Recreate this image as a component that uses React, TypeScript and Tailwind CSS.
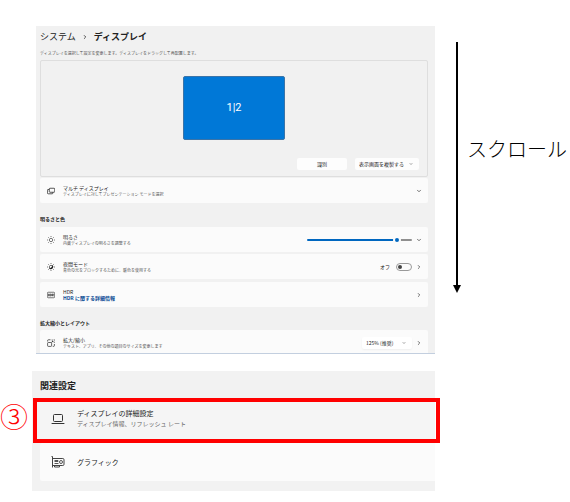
import * as React from 'react'
import { ChevronDown, ChevronRight } from 'lucide-react'
import { clsx } from 'clsx'

function MultiDisplayIcon() {
  return (
    <svg viewBox="0 0 16 16" className="size-2 shrink-0" fill="none" stroke="currentColor" strokeWidth="1.5">
      <rect x="4.5" y="2.5" width="11" height="8" rx="1.5" />
      <path d="M4.5 5H2.2A1.4 1.4 0 0 0 .8 6.4v5.4a1.8 1.8 0 0 0 1.8 1.8h7.6a1.4 1.4 0 0 0 1.4-1.4v-1.7" />
    </svg>
  )
}

function SunIcon({ filled = false }: { filled?: boolean }) {
  return (
    <svg viewBox="0 0 16 16" className="size-2 shrink-0" fill="none" stroke="currentColor" strokeWidth="1.2">
      <circle cx="8" cy="8" r="3.4" />
      {filled && <path d="M5.2 10.8A4 4 0 0 0 10.8 5.2 5 5 0 0 1 5.2 10.8Z" fill="currentColor" strokeWidth="2" />}
      <path d="M8 0v2M8 14v2M0 8h2M14 8h2M2.3 2.3l1.4 1.4M12.3 12.3l1.4 1.4M2.3 13.7l1.4-1.4M12.3 3.7l1.4-1.4" />
    </svg>
  )
}

function HdrIcon() {
  return (
    <svg viewBox="0 0 16 16" className="size-2 shrink-0" fill="none" stroke="currentColor" strokeWidth="1.2">
      <rect x=".7" y="2.5" width="14.6" height="11" rx="2" />
      <path d="M3 5.5v5M5.4 5.5v5M3 8h2.4M7.2 5.8v4.4h.6c2 0 2-4.4 0-4.4ZM11 10.5V5.8h1.2c1.5 0 1.5 2.3 0 2.3H11M12 8.2l1.2 2.3" />
    </svg>
  )
}

function ScaleIcon() {
  return (
    <svg viewBox="0 0 16 16" className="size-2 shrink-0" fill="none" stroke="currentColor" strokeWidth="1.4">
      <path d="M7 1.5H3A1.8 1.8 0 0 0 1.2 3.3V5M9.5 1.5H11M13.5 1.5h1.3V3M14.8 5.5v2M14.8 10v3a1.8 1.8 0 0 1-1.8 1.8h-1.5" />
      <rect x="1.2" y="7" width="8" height="7.8" rx="1.5" />
      <path d="M9 7l3-3M9.5 4H12v2.5" />
    </svg>
  )
}

function LaptopIcon() {
  return (
    <svg viewBox="0 0 14 14" className="size-3.5 shrink-0" fill="none" stroke="#333">
      <rect x="2.5" y="2.5" width="9" height="7" rx="1" />
      <path d="M1 11.5h12" strokeLinecap="round" />
    </svg>
  )
}

function GraphicsCardIcon() {
  return (
    <svg viewBox="0 0 14 14" className="size-3.5 shrink-0" fill="none" stroke="#444">
      <path d="M.5 1.5h1v11" />
      <path d="M1.5 3.5h10.3c.8 0 1.2.4 1.2 1.2v4.6c0 .8-.4 1.2-1.2 1.2H1.5" />
      <path d="M3.5 10.5v1.5h5v-1.5" />
      <path d="M3.5 5.5h3.5v1h-3.5M3.5 8.5h4" strokeWidth=".9" />
      <circle cx="10" cy="7" r="1.5" strokeWidth=".9" />
    </svg>
  )
}

interface SettingRowProps {
  icon: React.ReactNode
  title: string
  description: React.ReactNode
  htmlFor?: string
  expand?: boolean
  className?: string
  children?: React.ReactNode
}

function SettingRow({ icon, title, description, htmlFor, expand = false, className, children }: SettingRowProps) {
  const Chevron = expand ? ChevronDown : ChevronRight

  return (
    <div className={clsx('flex h-[25px] items-center rounded-xs bg-[#fbfbfb] pr-1.5 pl-[7px]', className)}>
      {icon}
      <div className="ml-2 min-w-0 flex-1 pb-px">
        {htmlFor ? (
          <label htmlFor={htmlFor} className="block text-[5px] leading-[7px]">
            {title}
          </label>
        ) : (
          <p className="text-[5px] leading-[7px]">{title}</p>
        )}
        <p className="text-[4px] leading-[6px] text-[#555]">{description}</p>
      </div>
      {children}
      <button type="button" aria-label={title} className="ml-1 shrink-0">
        <Chevron className="size-1.5 text-[#444]" strokeWidth={3} />
      </button>
    </div>
  )
}

function DisplaySettings() {
  const [brightness, setBrightness] = React.useState(89)
  const [nightLight, setNightLight] = React.useState(false)

  return (
    <section className="ml-9 overflow-hidden border-b border-[#c3cfdf] bg-[#f1f1f1] pr-[7px] pl-1">
      <nav className="flex h-[21px] items-center gap-1.5 text-[9px]">
        <a href="#system">システム</a>
        <ChevronRight className="size-1.5" strokeWidth={3} />
        <h1 className="font-bold">ディスプレイ</h1>
      </nav>
      <p className="h-[13px] text-[4px] leading-[13px] text-[#555]">
        ディスプレイを選択して設定を変更します。ディスプレイをドラッグして再配置します。
      </p>

      <div className="rounded-xs border border-[#dedede] px-2 pt-[15px] pb-1.5">
        <button
          type="button"
          className="mx-auto flex h-16 w-[102px] items-center justify-center rounded-xs border border-[#3b74a8] bg-[#0078d7] font-['Roboto'] text-[11px] text-white"
        >
          1|2
        </button>
        <div className="mt-[18px] flex justify-end gap-2 text-[5px]">
          <button type="button" className="h-3 w-[50px] rounded-xs bg-[#fdfdfd]">
            識別
          </button>
          <div className="relative h-3 w-16 rounded-xs bg-[#fdfdfd]">
            <select aria-label="表示画面" className="block h-3 w-full appearance-none pl-1 leading-3">
              <option>表示画面を複製する</option>
            </select>
            <ChevronDown className="pointer-events-none absolute top-1 right-1.5 size-1 text-[#444]" strokeWidth={3} />
          </div>
        </div>
      </div>

      <SettingRow
        className="mt-px"
        icon={<MultiDisplayIcon />}
        title="マルチ ディスプレイ"
        description="ディスプレイに対してプレゼンテーション モードを選択"
        expand
      />

      <h2 className="mt-3 mb-1 text-[5px] leading-[8px] font-bold">明るさと色</h2>
      <div className="flex flex-col gap-0.5">
        <SettingRow
          icon={<SunIcon />}
          title="明るさ"
          description="内蔵ディスプレイの明るさを調整する"
          htmlFor="brightness"
          expand
        >
          <input
            id="brightness"
            type="range"
            value={brightness}
            onChange={(e) => setBrightness(Number(e.target.value))}
            className="h-0.5 w-[105px] appearance-none rounded-full [&::-webkit-slider-thumb]:size-2 [&::-webkit-slider-thumb]:appearance-none [&::-webkit-slider-thumb]:rounded-full [&::-webkit-slider-thumb]:border-2 [&::-webkit-slider-thumb]:border-[#fbfbfb] [&::-webkit-slider-thumb]:bg-[#0067c0]"
            style={{ background: `linear-gradient(to right, #0067c0 ${brightness}%, #8f8f8f ${brightness}%)` }}
          />
        </SettingRow>
        <SettingRow
          icon={<SunIcon filled />}
          title="夜間モード"
          description="青色の光をブロックするために、暖色を使用する"
          htmlFor="night-light"
        >
          <span className="mr-1.5 text-[5px]">{nightLight ? 'オン' : 'オフ'}</span>
          <input
            id="night-light"
            type="checkbox"
            role="switch"
            checked={nightLight}
            onChange={(e) => setNightLight(e.target.checked)}
            className="flex h-2 w-4 appearance-none items-center rounded-full border border-[#999] px-px before:size-1 before:rounded-full before:bg-[#444] checked:justify-end"
          />
        </SettingRow>
        <SettingRow
          className="mt-px"
          icon={<HdrIcon />}
          title="HDR"
          description={
            <a href="#hdr" className="text-[5px] font-bold text-[#0a4a94]">
              HDR に関する詳細情報
            </a>
          }
        />
      </div>

      <h2 className="mt-3 mb-[3px] text-[5px] leading-[8px] font-bold">拡大縮小とレイアウト</h2>
      <SettingRow
        className="-mb-0.5"
        icon={<ScaleIcon />}
        title="拡大/縮小"
        description="テキスト、アプリ、その他の項目のサイズを変更します"
        htmlFor="scale"
      >
        <div className="relative h-3 w-[50px] rounded-xs bg-white shadow-xs">
          <select id="scale" className="block h-3 w-full appearance-none pl-1 text-[5px] leading-3">
            <option>125% (推奨)</option>
          </select>
          <ChevronDown className="pointer-events-none absolute top-1 right-1.5 size-1 text-[#444]" strokeWidth={3} />
        </div>
      </SettingRow>
    </section>
  )
}

function RelatedSettings() {
  return (
    <div className="mt-[17px] flex">
      <span className="mt-[25px] w-8 shrink-0 text-[28px] leading-10 font-light text-[#f00]">③</span>
      <section className="min-w-0 flex-1 bg-[#f2f2f2] pb-2.5 pl-2">
        <h2 className="h-[30px] text-[9px] leading-[30px] font-bold">関連設定</h2>
        <div className="relative">
          <a href="#advanced" className="flex h-[39px] items-center bg-[#f5f5f5] pb-1 pl-[11px]">
            <LaptopIcon />
            <span className="ml-3 block">
              <span className="block text-[7px] leading-[11px]">ディスプレイの詳細設定</span>
              <span className="block text-[6px] leading-[10px] text-[#666]">
                ディスプレイ情報、リフレッシュ レート
              </span>
            </span>
          </a>
          <span className="pointer-events-none absolute -inset-y-[3px] -right-[5px] -left-[7px] border-4 border-[#f00]" />
        </div>
        <a href="#graphics" className="mt-[3px] flex h-[38px] items-center rounded-l-xs bg-[#fbfbfb] pl-[11px]">
          <GraphicsCardIcon />
          <span className="ml-3 text-[7px]">グラフィック</span>
        </a>
      </section>
    </div>
  )
}

function ScrollHint() {
  return (
    <aside className="flex w-[135px] shrink-0 items-start pt-4 pl-[18px]">
      <svg viewBox="0 0 8 251" className="h-[251px] w-2 shrink-0">
        <path d="M4 0v245" stroke="#000" strokeWidth="2" />
        <path d="M0 243h8l-4 8Z" />
      </svg>
      <p className="ml-1.5 pt-[92px] text-xl leading-[30px] font-light whitespace-nowrap text-black">スクロール</p>
    </aside>
  )
}

export default function App() {
  return (
    <main className="flex min-h-screen bg-white pt-[26px] font-['Noto_Sans_CJK_JP',sans-serif] text-[#222]">
      <div className="min-w-0 flex-1">
        <DisplaySettings />
        <RelatedSettings />
      </div>
      <ScrollHint />
    </main>
  )
}
